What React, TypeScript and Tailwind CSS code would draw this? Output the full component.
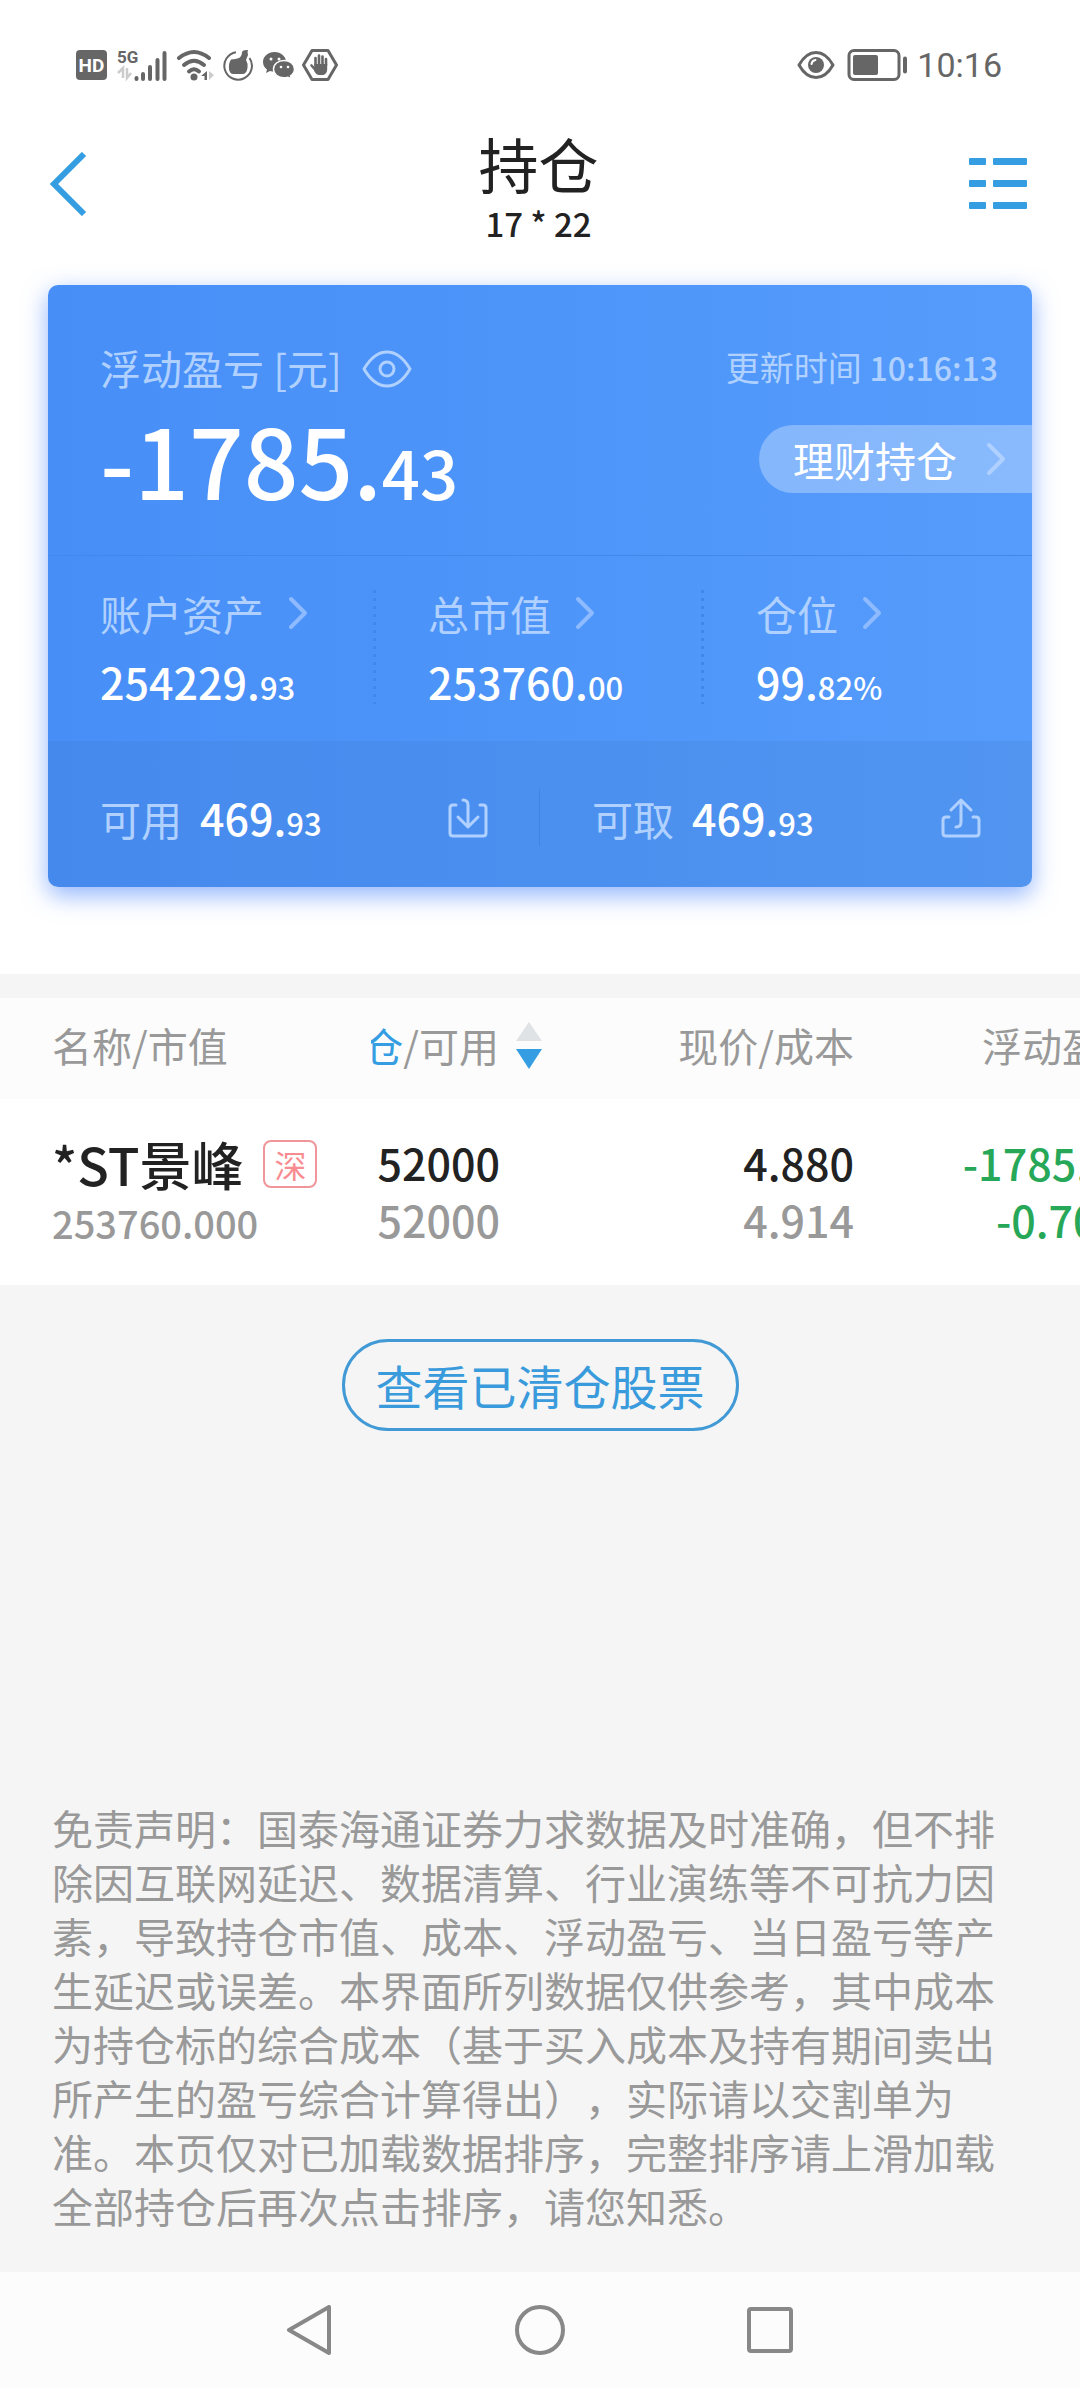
import { useState } from "react";

const accounts = [
  { label: "账户资产", value: "254229.", decimal: "93" },
  { label: "总市值", value: "253760.", decimal: "00" },
  { label: "仓位", value: "99.", decimal: "82%" },
];

const holdings = [
  {
    name: "*ST景峰",
    market: "深",
    marketValue: "253760.000",
    amount: "52000",
    available: "52000",
    price: "4.880",
    cost: "4.914",
    profit: "-1785.43",
    profitRate: "-0.70%",
  },
];

function StatusBar() {
  return (
    <div className="flex h-[130px] items-center justify-between pr-[78px] pl-[76px] text-[#666]">
      <div className="flex items-center">
        <span className="flex h-[30px] w-[31px] items-center justify-center rounded-[4px] bg-[#666] font-['Roboto',sans-serif] text-[19px] leading-none font-bold text-white">
          HD
        </span>

        {/* 5G 信号 */}
        <svg className="ml-[10px]" width="52" height="34" viewBox="0 0 52 34">
          <text x="0" y="15" fontFamily="Roboto, sans-serif" fontWeight="700" fontSize="17" fill="#666">
            5G
          </text>
          <path d="M1 25l5-5v10M10 20v10l4-5" fill="none" stroke="#ccc" strokeWidth="2.500" />
          <path d="M19.500 30v1M26 26v5M33 19v12M40.500 12v19M47.500 5v26" stroke="#666" strokeWidth="4" strokeLinecap="round" fill="none" />
        </svg>

        {/* WiFi */}
        <svg className="ml-[7px]" width="40" height="34" viewBox="0 0 40 34">
          <g fill="none" stroke="#666" strokeWidth="4" strokeLinecap="round">
            <path d="M3 10Q18 -2 33 10" />
            <path d="M8 17Q18 8.500 28 17" />
            <path d="M13 23.500Q18 19 23 23.500" />
          </g>
          <circle cx="18" cy="29" r="3.500" fill="#666" />
          <path d="M31 23v9h-2.500v-4H25z" fill="#666" />
          <path d="M33 23v9l5-5z" fill="#ccc" />
        </svg>

        <svg className="ml-[6px]" width="32" height="34" viewBox="0 0 32 34">
          <path d="M14 4.200A13.800 13.800 0 1 0 27.500 10" fill="none" stroke="#666" strokeWidth="2" />
          <path
            d="M9 11.500q5-.5 8-1.500 3-2 3-6 1-2.500 6-2-1 2 0 5l-2 5q2 3 1.500 8-1 6-5 6h-9q-4 0-4.500-5-.5-6 2-9.500z"
            fill="#666"
          />
        </svg>

        <svg className="ml-[8px]" width="34" height="34" viewBox="0 0 34 34">
          <path d="M12.500 4C6 4 1 8.500 1 14c0 3 1.500 5.500 4 7.500L4 25l4-2c1.500.5 3 .7 4.500.7C19 23.700 24 19.500 24 14S19 4 12.500 4z" fill="#666" />
          <path
            d="M22 12.500c-6 0-10.500 3.800-10.500 8.700s4.500 8.600 10.500 8.600c1.400 0 2.700-.2 3.900-.6l3.600 1.800-.9-3.200c2.400-1.600 3.900-3.900 3.900-6.600 0-4.900-4.500-8.700-10.500-8.700z"
            fill="#666"
            stroke="#fff"
            strokeWidth="1.500"
          />
          <g fill="#fff">
            <circle cx="9" cy="11" r="1.500" />
            <circle cx="17" cy="11" r="1.500" />
            <circle cx="19" cy="19" r="1.300" />
            <circle cx="26" cy="19" r="1.300" />
          </g>
        </svg>

        <svg className="ml-[6px]" width="36" height="34" viewBox="0 0 36 34">
          <path d="M10 2.500h16L34.500 17 26 31.500H10L1.500 17z" fill="none" stroke="#666" strokeWidth="3" strokeLinejoin="round" />
          <g stroke="#666" strokeWidth="2.600" strokeLinecap="round">
            <path d="M13.500 17V10M17 16V7.500M20.500 16V8.500M24 17V11M13.500 22L9.500 17.500" />
          </g>
          <path d="M12.200 16h13v5q0 5-4 6h-4q-3 0-5-4z" fill="#666" />
        </svg>
      </div>

      <div className="flex items-center">
        <svg width="38" height="30" viewBox="0 0 38 30">
          <path d="M2 15Q9 2.500 19 2.500T36 15Q29 27.500 19 27.500T2 15z" fill="none" stroke="#666" strokeWidth="3" strokeLinejoin="round" />
          <circle cx="19" cy="15" r="8" fill="#666" />
          <path d="M14.500 14q.5-3.500 4-4" fill="none" stroke="#fff" strokeWidth="2" strokeLinecap="round" />
        </svg>
        <svg className="ml-[12px]" width="62" height="34" viewBox="0 0 62 34">
          <rect x="2" y="2.500" width="50" height="29" rx="5" fill="none" stroke="#666" strokeWidth="3" />
          <rect x="6" y="7" width="25" height="20" rx="2" fill="#666" />
          <path d="M58 10.500v13" stroke="#666" strokeWidth="4" strokeLinecap="round" />
        </svg>
        <span className="ml-2 font-['Roboto',sans-serif] text-[34px] leading-[40px]">10:16</span>
      </div>
    </div>
  );
}

function ChevronRight({ className }: { className?: string }) {
  return (
    <svg className={className} width="20" height="34" viewBox="0 0 20 34" fill="none" stroke="currentColor" strokeWidth="4" strokeLinecap="round" strokeLinejoin="round">
      <path d="M3 3l14 14L3 31" />
    </svg>
  );
}

function Amount({ value, decimal }: { value: string; decimal: string }) {
  return (
    <span className="text-[43px] leading-[56px] font-medium text-white">
      {value}
      <span className="text-[31px] leading-none">{decimal}</span>
    </span>
  );
}

export default function App() {
  const [hidden, setHidden] = useState(false);

  return (
    <div
      lang="zh-CN"
      className="flex min-h-screen flex-col bg-[#f5f5f5] font-['Noto_Sans_CJK_SC',sans-serif] text-[#222]"
    >
      <div className="bg-white pb-[87px]">
        <StatusBar />

        {/* 标题栏 */}
        <header className="flex items-start justify-between px-12">
          <button aria-label="返回" className="mt-[22px] w-[60px]">
            <svg width="40" height="64" viewBox="0 0 40 64" fill="none" stroke="#359ee3" strokeWidth="6">
              <path d="M36 2L6 32l30 30" />
            </svg>
          </button>
          <div className="text-center">
            <h1 className="text-[60px] leading-[66px]">持仓</h1>
            <p className="mt-[7px] text-[33px] leading-[40px] font-medium">17 * 22</p>
          </div>
          <button aria-label="菜单" className="mt-[22px] w-[63px]">
            <svg width="63" height="64" viewBox="0 0 63 64" fill="#359ee3">
              <rect x="0" y="6" width="17" height="7" rx="1" />
              <rect x="24" y="6" width="34" height="7" rx="1" />
              <rect x="0" y="28" width="17" height="7" rx="1" />
              <rect x="24" y="28" width="34" height="7" rx="1" />
              <rect x="0" y="50" width="17" height="7" rx="1" />
              <rect x="24" y="50" width="34" height="7" rx="1" />
            </svg>
          </button>
        </header>

        {/* 资产卡片 */}
        <section className="mx-12 mt-[42px] overflow-hidden rounded-[10px] bg-linear-to-r from-[#478ef7] to-[#559cfc] text-[#b0d1ff] shadow-[0_8px_24px_rgba(70,130,250,0.6)]">
          <div className="border-b border-[#4487ea] pt-[54px] pb-[46px] pl-[52px]">
            <div className="flex items-center justify-between pr-[34px]">
              <div className="flex items-center">
                <h2 className="text-[41px] leading-[56px]">浮动盈亏 [元]</h2>
                <button aria-label="显示或隐藏金额" className="mt-1 ml-5" onClick={() => setHidden(!hidden)}>
                  <svg width="50" height="38" viewBox="0 0 50 38" fill="none" stroke="currentColor" strokeWidth="3">
                    <path d="M2 19Q12 2 25 2t23 17Q38 36 25 36T2 19z" strokeLinejoin="round" />
                    <circle cx="25" cy="19" r="7" />
                  </svg>
                </button>
              </div>
              <p className="text-[34px] leading-[56px]">
                更新时间 <span className="text-[32px] leading-none font-medium">10:16:13</span>
              </p>
            </div>
            <div className="mt-[14px] flex items-end justify-between">
              <p className="text-[96px] leading-[100px] font-medium text-white">
                {hidden ? "****" : "-1785."}
                {!hidden && <span className="text-[67px] leading-none">43</span>}
              </p>
              <button className="mb-4 flex h-[68px] items-center rounded-l-full bg-white/30 pr-[26px] pl-[34px]">
                <span className="text-[41px] leading-[56px] text-white">理财持仓</span>
                <ChevronRight className="ml-[29px]" />
              </button>
            </div>
          </div>

          <div className="grid grid-cols-3">
            {accounts.map((item, index) => (
              <div key={item.label} className="flex justify-between">
                <div className="flex flex-col pt-[29px] pb-[32px] pl-[52px]">
                  <button className="flex items-center text-[41px] leading-[56px]">
                    {item.label}
                    <ChevronRight className="ml-6 text-[#8ebbff]" />
                  </button>
                  <div className="mt-[12px] flex">
                    <Amount value={item.value} decimal={item.decimal} />
                  </div>
                </div>
                {index < accounts.length - 1 && (
                  <div className="mt-[34px] mb-[37px] w-[3px] bg-[repeating-linear-gradient(to_bottom,#4387ea_0_3px,transparent_3px_8px)]" />
                )}
              </div>
            ))}
          </div>

          <div className="grid grid-cols-2 bg-[#3f6fb4]/15 pt-[48px] pb-[41px]">
            <div className="flex items-center justify-between border-r border-[#4383e2] pr-[51px] pl-[52px]">
              <div className="flex items-baseline text-[41px] leading-[56px]">
                <span className="mr-[18px]">可用</span>
                <Amount value="469." decimal="93" />
              </div>
              <button aria-label="转入">
                <svg width="40" height="40" viewBox="0 0 40 40" fill="none" stroke="currentColor" strokeWidth="3" strokeLinecap="round" strokeLinejoin="round">
                  <path d="M8 7H5q-3 0-3 3v25q0 3 3 3h30q3 0 3-3V10q0-3-3-3h-3" />
                  <path d="M15 2q5 0 5 5v21M10 19l10 10 10-10" />
                </svg>
              </button>
            </div>
            <div className="flex items-center justify-between pr-[51px] pl-[52px]">
              <div className="flex items-baseline text-[41px] leading-[56px]">
                <span className="mr-[18px]">可取</span>
                <Amount value="469." decimal="93" />
              </div>
              <button aria-label="转出">
                <svg width="40" height="40" viewBox="0 0 40 40" fill="none" stroke="currentColor" strokeWidth="3" strokeLinecap="round" strokeLinejoin="round">
                  <path d="M8 19H5q-3 0-3 3v13q0 3 3 3h30q3 0 3-3V22q0-3-3-3h-3" />
                  <path d="M15 29q5 0 5-5V3M10 12L20 2l10 10" />
                </svg>
              </button>
            </div>
          </div>
        </section>
      </div>

      {/* 持仓列表 */}
      <div className="mt-6 overflow-hidden bg-white">
        <table className="w-[1142px] table-fixed">
          <thead className="bg-[#fcfcfc] text-[40px] leading-[56px] text-[#999]">
            <tr>
              <th className="w-[371px] pt-[19px] pb-[26px] pl-[52px] text-left font-normal">名称/市值</th>
              <th className="w-[174px] pt-[19px] pb-[26px] font-normal">
                <button className="flex items-center">
                  <span className="flex w-[128px] justify-end overflow-hidden whitespace-nowrap">
                    <span className="text-[#359ee3]">仓</span>/可用
                  </span>
                  <svg className="ml-[17px]" width="26" height="48" viewBox="0 0 26 48">
                    <path d="M13 1l13 19H0z" fill="#e0e3e5" />
                    <path d="M0 28h26L13 48z" fill="#359ee3" />
                  </svg>
                </button>
              </th>
              <th className="w-[309px] pt-[19px] pb-[26px] text-right font-normal">现价/成本</th>
              <th className="pt-[19px] pb-[26px] text-right font-normal">浮动盈亏</th>
            </tr>
          </thead>
          <tbody className="text-[43px] leading-[57px] font-medium">
            {holdings.map((item) => (
              <tr key={item.name} className="align-top">
                <td className="pt-[37px] pl-[52px]">
                  <div className="flex items-center">
                    <span className="text-[52px] leading-[56px]">{item.name}</span>
                    <span className="ml-5 flex h-[48px] w-[54px] items-center justify-center rounded-[8px] border-2 border-[#f0959a] text-[32px] leading-none font-normal text-[#f98c90]">
                      {item.market}
                    </span>
                  </div>
                  <div className="mt-[7px] text-[38px] leading-[48px] text-[#999]">{item.marketValue}</div>
                </td>
                <td className="pt-[35px] pr-[45px] pb-[37px] text-right">
                  <div>{item.amount}</div>
                  <div className="text-[#999]">{item.available}</div>
                </td>
                <td className="pt-[35px] text-right">
                  <div>{item.price}</div>
                  <div className="text-[#999]">{item.cost}</div>
                </td>
                <td className="pt-[35px] pr-1 text-right text-[#27a758]">
                  <div>{item.profit}</div>
                  <div>{item.profitRate}</div>
                </td>
              </tr>
            ))}
          </tbody>
        </table>
      </div>

      <button className="mx-auto mt-[54px] h-[92px] rounded-full border-3 border-[#419ad6] px-[31px] text-[47px] leading-[86px] text-[#3a9bdc]">
        查看已清仓股票
      </button>

      {/* 免责声明 */}
      <p className="mt-auto mb-10 pr-20 pl-[52px] text-[41px] leading-[54px] text-[#999] [text-spacing-trim:space-all]">
        免责声明：国泰海通证券力求数据及时准确，但不排除因互联网延迟、数据清算、行业演练等不可抗力因素，导致持仓市值、成本、浮动盈亏、当日盈亏等产生延迟或误差。本界面所列数据仅供参考，其中成本为持仓标的综合成本（基于买入成本及持有期间卖出所产生的盈亏综合计算得出），实际请以交割单为准。本页仅对已加载数据排序，完整排序请上滑加载全部持仓后再次点击排序，请您知悉。
      </p>

      {/* 系统导航 */}
      <nav className="flex h-[116px] items-center justify-center bg-[#fcfcfc]">
        <button aria-label="后退" className="flex w-[230px] justify-center">
          <svg width="50" height="50" viewBox="0 0 50 50" fill="none" stroke="#888" strokeWidth="4" strokeLinejoin="round">
            <path d="M44 2v46L4 25z" />
          </svg>
        </button>
        <button aria-label="主屏幕" className="flex w-[230px] justify-center">
          <svg width="50" height="50" viewBox="0 0 50 50" fill="none" stroke="#888" strokeWidth="4">
            <circle cx="25" cy="25" r="23" />
          </svg>
        </button>
        <button aria-label="最近任务" className="flex w-[230px] justify-center">
          <svg width="50" height="50" viewBox="0 0 50 50" fill="none" stroke="#888" strokeWidth="4" strokeLinejoin="round">
            <rect x="4" y="4" width="42" height="42" rx="2" />
          </svg>
        </button>
      </nav>
    </div>
  );
}
